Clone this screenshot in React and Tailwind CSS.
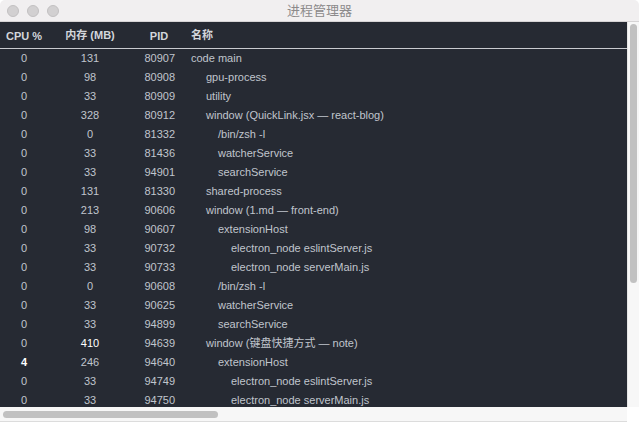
import React from "react";

const rows = [
  ["0", "131", "80907", "code main", 0],
  ["0", "98", "80908", "gpu-process", 1],
  ["0", "33", "80909", "utility", 1],
  ["0", "328", "80912", "window (QuickLink.jsx — react-blog)", 1],
  ["0", "0", "81332", "/bin/zsh -l", 2],
  ["0", "33", "81436", "watcherService", 2],
  ["0", "33", "94901", "searchService", 2],
  ["0", "131", "81330", "shared-process", 1],
  ["0", "213", "90606", "window (1.md — front-end)", 1],
  ["0", "98", "90607", "extensionHost", 2],
  ["0", "33", "90732", "electron_node eslintServer.js", 3],
  ["0", "33", "90733", "electron_node serverMain.js", 3],
  ["0", "0", "90608", "/bin/zsh -l", 2],
  ["0", "33", "90625", "watcherService", 2],
  ["0", "33", "94899", "searchService", 2],
  ["0", "410", "94639", "window (键盘快捷方式 — note)", 1, "mem"],
  ["4", "246", "94640", "extensionHost", 2, "cpu"],
  ["0", "33", "94749", "electron_node eslintServer.js", 3],
  ["0", "33", "94750", "electron_node serverMain.js", 3],
];

const indent = ["pl-[5px]", "pl-[20px]", "pl-[32px]", "pl-[45px]"];

export default function App() {
  return (
    <div
      className="w-[639px] h-[422px] bg-white overflow-hidden flex flex-col"
      style={{ fontFamily: '"Liberation Sans", "Noto Sans CJK SC", Arial, sans-serif' }}
    >
      <div className="h-[22px] shrink-0 bg-[#f1eff0] rounded-t-[5px] border-b border-[#d6d4d5] flex items-center relative">
        <div className="flex gap-[8px] pl-[7px]">
          <div className="w-[12px] h-[12px] rounded-full bg-[#d2d0d1] border border-[#c2c0c1]" />
          <div className="w-[12px] h-[12px] rounded-full bg-[#d2d0d1] border border-[#c2c0c1]" />
          <div className="w-[12px] h-[12px] rounded-full bg-[#d2d0d1] border border-[#c2c0c1]" />
        </div>
        <div className="absolute inset-0 flex items-center justify-center text-[13px] text-[#8c8a8b]">
          进程管理器
        </div>
      </div>
      <div className="flex flex-1 min-h-0">
        <div className="flex flex-col w-[627px]">
          <div className="h-[385px] bg-[#262a33] overflow-hidden">
            <div className="grid grid-cols-[48px_84px_54px_1fr] h-[27px] items-center border-b border-[#c9cbd0] text-[11px] font-bold text-[#d3d6dc]">
              <div className="text-center pt-[3px]">CPU %</div>
              <div className="text-center">内存 (MB)</div>
              <div className="text-center pt-[3px]">PID</div>
              <div className="pl-[5px]">名称</div>
            </div>
            {rows.map((r, i) => (
              <div
                key={i}
                className="grid grid-cols-[48px_84px_54px_1fr] h-[19px] items-center text-[11px] text-[#c0c5cd] whitespace-nowrap"
              >
                <div className={"text-center " + (r[5] === "cpu" ? "text-white font-bold" : "")}>{r[0]}</div>
                <div className={"text-center " + (r[5] === "mem" ? "text-white" : "")}>{r[1]}</div>
                <div className="text-right pr-[11px]">{r[2]}</div>
                <div className={indent[r[4]]}>{r[3]}</div>
              </div>
            ))}
          </div>
          <div className="flex-1 bg-[#f7f7f7] border-b border-[#dcdcdc] flex items-center pl-[3px]">
            <div className="w-[215px] h-[7px] rounded-full bg-[#c1c1c1]" />
          </div>
        </div>
        <div className="w-[12px] flex flex-col">
          <div className="h-[385px] bg-[#f7f7f7] border-l border-[#e6e6e6] pt-[2px] pl-[2px]">
            <div className="w-[7px] h-[259px] rounded-full bg-[#c1c1c1]" />
          </div>
          <div className="flex-1 bg-white" />
        </div>
      </div>
    </div>
  );
}
